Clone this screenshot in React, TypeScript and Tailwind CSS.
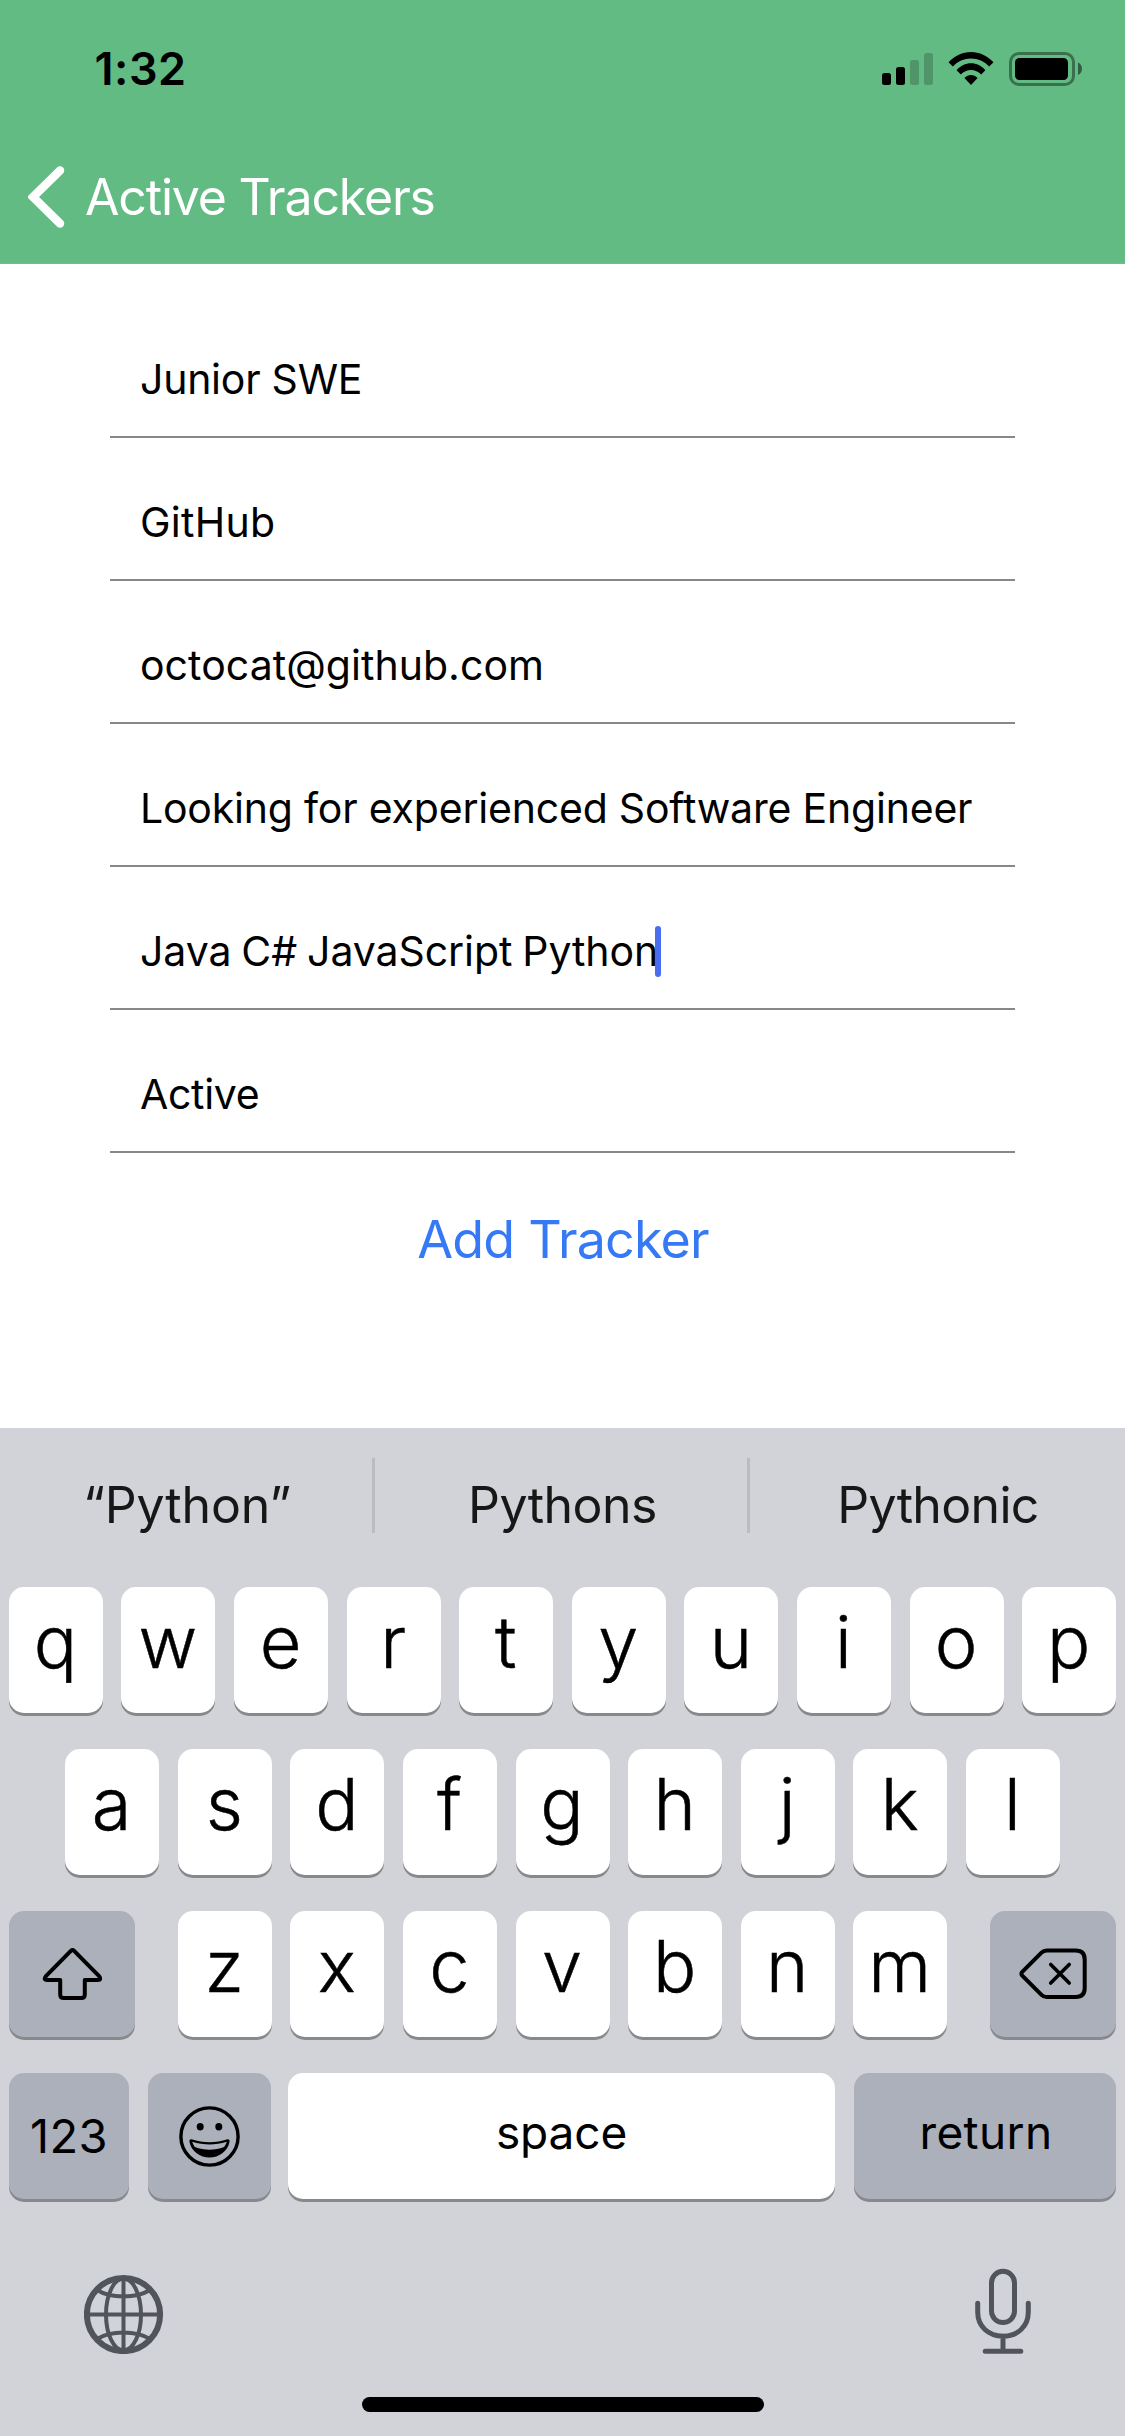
import type { ReactNode } from "react";

type Field = { value: string; tracking: string; focused?: boolean };

const fields: Field[] = [
  { value: "Junior SWE", tracking: "tracking-[-0.25px]" },
  { value: "GitHub", tracking: "tracking-[0.27px]" },
  { value: "octocat@github.com", tracking: "tracking-[0.04px]" },
  { value: "Looking for experienced Software Engineer", tracking: "tracking-[-0.2px]" },
  { value: "Java C# JavaScript Python", tracking: "tracking-[-0.07px] [word-spacing:-1.5px]", focused: true },
  { value: "Active", tracking: "tracking-[-0.3px]" },
];

function StatusIcons() {
  return (
    <svg width="200" height="34" viewBox="0 0 200 34" aria-hidden="true">
      <rect x="0" y="21" width="9" height="12" rx="2.5" />
      <rect x="14" y="15" width="9" height="18" rx="2.5" />
      <rect x="28" y="8" width="9" height="25" rx="2.5" opacity="0.2" />
      <rect x="42" y="1" width="9" height="32" rx="2.5" opacity="0.2" />
      <path d="M66.500 10.200C72.500 3.800 80.500 0 89 0s16.500 3.800 22.500 10.200l-4.300 4.300C102.300 9.500 96 6.600 89 6.600s-13.300 2.900-18.200 7.900z" />
      <path d="M74.600 18.200C78.500 13.900 83.500 11.300 89 11.300s10.500 2.600 14.400 6.900l-4.200 4.200C96.300 19.600 92.800 18 89 18s-7.300 1.600-10.200 4.400z" />
      <path d="M82.400 26C84.300 24.100 86.500 23 89 23s4.700 1.100 6.600 3L89 33z" />
      <rect x="128.500" y="1.500" width="63" height="31" rx="8.500" fill="none" stroke="#000" strokeWidth="3" opacity="0.4" />
      <rect x="133" y="6" width="53" height="22" rx="4.500" />
      <path d="M196 10.500c2.500 1 4 3.500 4 6.200s-1.500 5.300-4 6.300z" opacity="0.5" />
    </svg>
  );
}

function Chevron() {
  return (
    <svg width="37" height="62" viewBox="0 0 37 62" fill="none" aria-hidden="true">
      <path d="M32 4.500L5 31l27 26.500" stroke="#fff" strokeWidth="8.500" strokeLinecap="round" />
    </svg>
  );
}

function ShiftIcon() {
  return (
    <svg width="60" height="54" viewBox="-0.5 0 60 54" fill="none" stroke="#000" strokeWidth="4" strokeLinejoin="round" aria-hidden="true">
      <path d="M28.600 3.600Q30 2.200 31.400 3.600L56.600 29.200Q59.400 33 55.500 33H42.300V47.500Q42.300 51 38.800 51H21.200Q17.700 51 17.700 47.500V33H4.500Q.6 33 3.400 29.200Z" />
    </svg>
  );
}

function BackspaceIcon() {
  return (
    <svg width="69" height="52" viewBox="0.8 0 69 52" fill="none" stroke="#000" strokeWidth="4" strokeLinejoin="round" strokeLinecap="round" aria-hidden="true">
      <path d="M28.500 2.500H57.500Q66.500 2.500 66.500 11.500V40Q66.500 49 57.500 49H28.500Q25.500 49 23.300 46.800L3.800 27.400Q2.600 25.800 3.800 24.100L23.300 4.700Q25.500 2.500 28.500 2.500Z" />
      <path d="M32.500 16.500l18.500 18.500M51 16.500L32.500 35" strokeWidth="3.600" />
    </svg>
  );
}

function EmojiIcon() {
  return (
    <svg width="61" height="61" viewBox="0 0 61 61" fill="none" aria-hidden="true">
      <circle cx="30.500" cy="30.500" r="28.600" stroke="#000" strokeWidth="3.400" />
      <ellipse cx="21.200" cy="20.700" rx="3.500" ry="3.700" fill="#000" />
      <ellipse cx="39.800" cy="20.700" rx="3.500" ry="3.700" fill="#000" />
      <path
        fillRule="evenodd"
        fill="#000"
        d="M12.500 33.300C18.500 35.200 24.500 36.200 30.500 36.200S42.500 35.200 48.500 33.300Q51 33 50.500 36C48.500 45.500 40 51.500 30.500 51.500S12.500 45.500 10.500 36Q10 33 12.500 33.300ZM13.300 35.800C13.800 37.800 14.700 39.600 15.900 41C20.500 42.800 25.500 43.700 30.500 43.700S40.500 42.800 45.100 41C46.300 39.600 47.200 37.800 47.700 35.800C42 37.700 36 38.500 30.500 38.500S19 37.700 13.300 35.800Z"
      />
    </svg>
  );
}

function GlobeIcon() {
  return (
    <svg width="80" height="80" viewBox="0 0 80 80" fill="none" stroke="#51555b" aria-hidden="true">
      <circle cx="39.500" cy="40.500" r="36.600" strokeWidth="6" />
      <g strokeWidth="4">
        <ellipse cx="39.500" cy="40.500" rx="17.500" ry="36" />
        <path d="M39.500 4.500v72M3 40.500h73M13 16C20 20.300 29.500 22.500 39.500 22.500s19.500-2.200 26.500-6.500M13 65C20 60.700 29.500 58.500 39.500 58.500s19.500 2.200 26.500 6.500" />
      </g>
    </svg>
  );
}

function MicIcon() {
  return (
    <svg width="56" height="86" viewBox="0 0 56 86" fill="none" stroke="#51555b" strokeWidth="5" strokeLinecap="round" aria-hidden="true">
      <rect x="16.500" y="3.300" width="23" height="51.300" rx="11.500" />
      <path d="M2.700 35.200V44C2.700 58.500 13.500 68.200 28 68.200S53.300 58.500 53.300 44V35.200M28 68V83M10.200 83.300H45.800" />
    </svg>
  );
}

function Key({ children, className = "" }: { children: ReactNode; className?: string }) {
  return (
    <div className={`flex h-[126px] shrink-0 justify-center rounded-[15px] shadow-[0_3px_0_#88898d] ${className}`}>
      {children}
    </div>
  );
}

function Letters({ letters }: { letters: string }) {
  return (
    <div className="flex gap-[18.6px]">
      {letters.split("").map((letter) => (
        <Key key={letter} className="w-[94px] bg-white pr-px text-[72px] leading-[110px] font-light [-webkit-text-stroke:0.5px_black]">
          {letter}
        </Key>
      ))}
    </div>
  );
}

export default function App() {
  return (
    <div className="flex h-[2436px] w-[1125px] flex-col overflow-hidden bg-white font-[Inter,'Liberation_Sans',sans-serif] text-black">
      <header className="h-[264px] shrink-0 border-b border-[#8fa99a] bg-[#63bb84]">
        <div className="flex h-[138px] items-center justify-between pr-[43px] pl-[94.5px]">
          <span className="text-[45px] font-semibold tracking-[0.5px]">1:32</span>
          <StatusIcons />
        </div>
        <div className="flex h-[118px] items-center gap-5 pl-7 text-white">
          <Chevron />
          <span className="text-[50px] tracking-[-1.18px]">Active Trackers</span>
        </div>
      </header>

      <main className="flex h-[1164px] shrink-0 flex-col px-[110px] pt-[31px]">
        {fields.map((field) => (
          <div
            key={field.value}
            className="flex h-[143px] shrink-0 items-end border-b-2 border-[#888888] pb-8 pl-[30px] text-[41px] leading-[50px] whitespace-nowrap"
          >
            <span className={field.tracking}>{field.value}</span>
            {field.focused && <span className="-mb-px -ml-[3px] h-[51px] w-1.5 rounded-full bg-[#4a6cee]" />}
          </div>
        ))}
        <button className="mt-[57px] pl-px text-center text-[52px] leading-[60px] tracking-[-0.82px] text-[#3579f6]">
          Add Tracker
        </button>
      </main>

      <section className="flex flex-1 flex-col bg-[#d2d3d9]">
        <div className="flex h-[159px] shrink-0 pt-[30px] text-center text-[50px] leading-[60px] text-[#161717]">
          <div className="h-[75px] w-[375px] border-r-[3px] border-[#bbbcc1] pt-[17px] pl-[2px] tracking-[-0.15px]">“Python”</div>
          <div className="h-[75px] w-[375px] border-r-[3px] border-[#bbbcc1] pt-[17px] pl-[3px] tracking-[-0.53px]">Pythons</div>
          <div className="h-[75px] w-[375px] pt-[17px] pl-px tracking-[-0.69px]">Pythonic</div>
        </div>

        <div className="flex flex-col gap-9">
          <div className="flex justify-center">
            <Letters letters="qwertyuiop" />
          </div>
          <div className="flex justify-center">
            <Letters letters="asdfghjkl" />
          </div>
          <div className="flex justify-between px-[9px]">
            <Key className="w-[126px] items-center bg-[#abb0bb]">
              <ShiftIcon />
            </Key>
            <Letters letters="zxcvbnm" />
            <Key className="w-[126px] items-center bg-[#abb0bb]">
              <BackspaceIcon />
            </Key>
          </div>
          <div className="flex justify-between px-[9px]">
            <Key className="w-[120px] bg-[#abb0bb] text-[47px] leading-[126px] tracking-[0.46px]">123</Key>
            <Key className="w-[123px] items-center bg-[#abb0bb]">
              <EmojiIcon />
            </Key>
            <Key className="-ml-0.5 w-[547px] bg-white text-[46px] leading-[118px] tracking-[-0.13px]">space</Key>
            <Key className="w-[262px] bg-[#abb0bb] pl-0.5 text-[46px] leading-[118px] tracking-[0.37px]">return</Key>
          </div>
        </div>

        <div className="mt-[69px] flex h-[86px] shrink-0 items-end justify-between pr-[94px] pl-[84px]">
          <GlobeIcon />
          <MicIcon />
        </div>
        <div className="mt-[43px] h-[15px] w-[402px] shrink-0 self-center rounded-full bg-black" />
      </section>
    </div>
  );
}
